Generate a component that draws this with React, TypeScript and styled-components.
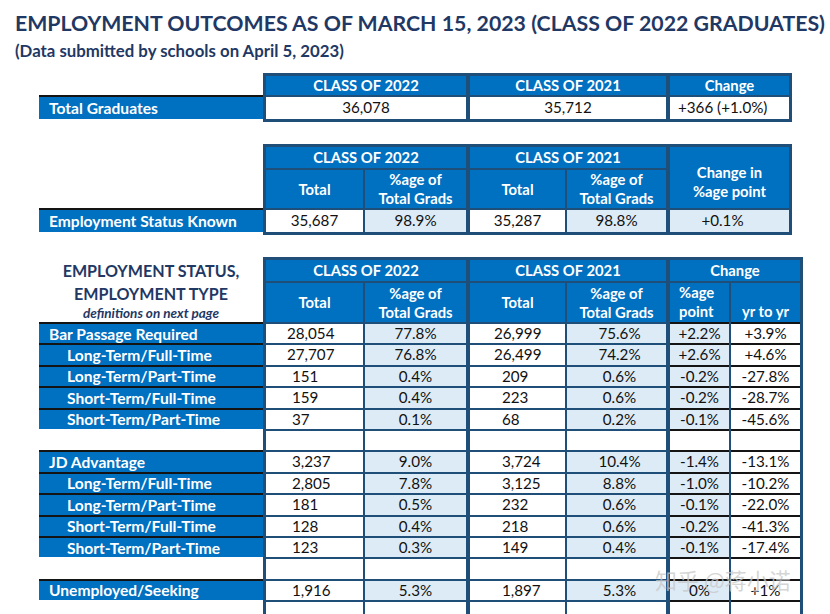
import React from 'react';
import styled, { createGlobalStyle } from 'styled-components';

const BLUE = '#0070C0';
const DARK = '#1F4E79';
const LIGHT = '#DDEBF7';
const NAVY = '#1F3864';
const RULE = '#141414';

const Global = createGlobalStyle`
  html, body { margin: 0; padding: 0; background: #ffffff; }
  body { font-family: Lato, "Noto Sans", sans-serif; }
`;

const Page = styled.div`
  position: relative;
  width: 830px;
  height: 614px;
  overflow: hidden;
  box-sizing: border-box;
  padding: 10px 0 0 15px;
  display: flex;
  flex-direction: column;
`;

const Title = styled.h1`
  margin: 0;
  font-size: 21.3px;
  line-height: 26px;
  font-weight: 700;
  color: ${NAVY};
  white-space: nowrap;
`;

const Subtitle = styled.div`
  margin-top: 5px;
  font-size: 16.8px;
  line-height: 20px;
  font-weight: 700;
  color: ${NAVY};
  white-space: nowrap;
`;

const Section = styled.section<{ $top: number }>`
  display: flex;
  align-items: flex-start;
  margin-left: 24px;
  margin-top: ${(p) => p.$top}px;
`;

const LabelCol = styled.div<{ $offset: number }>`
  width: 224px;
  flex: none;
  display: flex;
  flex-direction: column;
  padding-top: ${(p) => p.$offset}px;
`;

const LabelHead = styled.div`
  height: 65px;
  box-sizing: border-box;
  padding-top: 2px;
  display: flex;
  flex-direction: column;
  align-items: center;
  color: ${NAVY};
  font-weight: 700;
`;

const HeadLine = styled.div`
  font-size: 16.1px;
  line-height: 23px;
  white-space: nowrap;
`;

const HeadNote = styled.div`
  font-size: 13.5px;
  line-height: 17px;
  font-style: italic;
  white-space: nowrap;
`;

const LabelBar = styled.div<{ $h: number; $sub?: boolean; $blank?: boolean }>`
  height: ${(p) => p.$h}px;
  border-top: 2px solid ${(p) => (p.$blank ? 'transparent' : RULE)};
  background: ${(p) => (p.$blank ? 'transparent' : BLUE)};
  color: #ffffff;
  font-size: 15.6px;
  font-weight: 700;
  padding-left: ${(p) => (p.$sub ? 28 : 10)}px;
  display: flex;
  align-items: center;
  white-space: nowrap;
`;

const Frame = styled.div<{ $cols: string; $rows: string }>`
  flex: none;
  display: grid;
  grid-template-columns: ${(p) => p.$cols};
  grid-template-rows: ${(p) => p.$rows};
  gap: 2px;
  padding: 3px;
  background: ${DARK};
`;

const HeadCell = styled.div<{
  $span?: number;
  $rowSpan?: number;
  $group?: boolean;
  $left?: boolean;
  $bottom?: boolean;
  $padTop?: number;
}>`
  grid-column: span ${(p) => p.$span ?? 1};
  grid-row: span ${(p) => p.$rowSpan ?? 1};
  margin-left: ${(p) => (p.$group ? 2 : 0)}px;
  background: ${BLUE};
  color: #ffffff;
  font-size: 14.8px;
  font-weight: 700;
  line-height: 19px;
  display: flex;
  flex-direction: column;
  justify-content: ${(p) => (p.$bottom ? 'flex-end' : 'center')};
  align-items: ${(p) => (p.$left ? 'flex-start' : 'center')};
  text-align: ${(p) => (p.$left ? 'left' : 'center')};
  padding: ${(p) => p.$padTop ?? 0}px 0 ${(p) => (p.$bottom ? 1 : 0)}px ${(p) => (p.$left ? 9 : 0)}px;
  white-space: nowrap;
  box-sizing: border-box;
`;

const DataCell = styled.div<{
  $tone: 'white' | 'light';
  $span?: number;
  $group?: boolean;
  $left?: boolean;
  $pad?: number;
  $padR?: number;
  $rule?: boolean;
}>`
  grid-column: span ${(p) => p.$span ?? 1};
  margin-left: ${(p) => (p.$group ? 2 : 0)}px;
  background: ${(p) => (p.$tone === 'light' ? LIGHT : '#ffffff')};
  color: #111111;
  font-size: 15.2px;
  line-height: 1;
  display: flex;
  align-items: center;
  justify-content: ${(p) => (p.$left ? 'flex-start' : 'center')};
  padding-left: ${(p) => p.$pad ?? 0}px;
  padding-right: ${(p) => p.$padR ?? 0}px;
  box-shadow: ${(p) => (p.$rule ? `0 -2px 0 ${RULE}` : 'none')};
  white-space: nowrap;
  box-sizing: border-box;
`;

const Watermark = styled.div`
  position: absolute;
  left: 655px;
  top: 565px;
  font-family: "Noto Sans CJK SC", sans-serif;
  font-size: 22px;
  line-height: 28px;
  color: rgba(200, 200, 200, 0.75);
  white-space: nowrap;
  pointer-events: none;
`;

type Row = {
  label?: string;
  sub?: boolean;
  wide?: boolean;
  v?: [string, string, string, string, string, string];
};

const rows: Row[] = [
  { label: 'Bar Passage Required', wide: true, v: ['28,054', '77.8%', '26,999', '75.6%', '+2.2%', '+3.9%'] },
  { label: 'Long-Term/Full-Time', sub: true, wide: true, v: ['27,707', '76.8%', '26,499', '74.2%', '+2.6%', '+4.6%'] },
  { label: 'Long-Term/Part-Time', sub: true, v: ['151', '0.4%', '209', '0.6%', '-0.2%', '-27.8%'] },
  { label: 'Short-Term/Full-Time', sub: true, v: ['159', '0.4%', '223', '0.6%', '-0.2%', '-28.7%'] },
  { label: 'Short-Term/Part-Time', sub: true, v: ['37', '0.1%', '68', '0.2%', '-0.1%', '-45.6%'] },
  {},
  { label: 'JD Advantage', v: ['3,237', '9.0%', '3,724', '10.4%', '-1.4%', '-13.1%'] },
  { label: 'Long-Term/Full-Time', sub: true, v: ['2,805', '7.8%', '3,125', '8.8%', '-1.0%', '-10.2%'] },
  { label: 'Long-Term/Part-Time', sub: true, v: ['181', '0.5%', '232', '0.6%', '-0.1%', '-22.0%'] },
  { label: 'Short-Term/Full-Time', sub: true, v: ['128', '0.4%', '218', '0.6%', '-0.2%', '-41.3%'] },
  { label: 'Short-Term/Part-Time', sub: true, v: ['123', '0.3%', '149', '0.4%', '-0.1%', '-17.4%'] },
  {},
  { label: 'Unemployed/Seeking', v: ['1,916', '5.3%', '1,897', '5.3%', '0%', '+1%'] },
  {},
];

const ROW_H = 19.4;
const COLS5 = '97px 101px 97px 99px 121px';
const COLS6 = '97px 101px 97px 99px 61px 69px';

export default function App() {
  return (
    <Page>
      <Global />
      <Title>EMPLOYMENT OUTCOMES AS OF MARCH 15, 2023 (CLASS OF 2022 GRADUATES)</Title>
      <Subtitle>(Data submitted by schools on April 5, 2023)</Subtitle>

      <Section $top={12}>
        <LabelCol $offset={22}>
          <LabelBar $h={22}>Total Graduates</LabelBar>
        </LabelCol>
        <Frame $cols={COLS5} $rows="19px 22px">
          <HeadCell $span={2}>CLASS OF 2022</HeadCell>
          <HeadCell $span={2} $group>CLASS OF 2021</HeadCell>
          <HeadCell $group>Change</HeadCell>
          <DataCell $tone="white" $span={2}>36,078</DataCell>
          <DataCell $tone="white" $span={2} $group>35,712</DataCell>
          <DataCell $tone="white" $group $left $pad={8}>+366 (+1.0%)</DataCell>
        </Frame>
      </Section>

      <Section $top={22}>
        <LabelCol $offset={64}>
          <LabelBar $h={22}>Employment Status Known</LabelBar>
        </LabelCol>
        <Frame $cols={COLS5} $rows="21px 38px 22px">
          <HeadCell $span={2}>CLASS OF 2022</HeadCell>
          <HeadCell $span={2} $group>CLASS OF 2021</HeadCell>
          <HeadCell $group $rowSpan={2} $padTop={8}>
            <span>Change in</span>
            <span>%age point</span>
          </HeadCell>
          <HeadCell>Total</HeadCell>
          <HeadCell>
            <span>%age of</span>
            <span>Total Grads</span>
          </HeadCell>
          <HeadCell $group>Total</HeadCell>
          <HeadCell>
            <span>%age of</span>
            <span>Total Grads</span>
          </HeadCell>
          <DataCell $tone="white">35,687</DataCell>
          <DataCell $tone="light">98.9%</DataCell>
          <DataCell $tone="white" $group>35,287</DataCell>
          <DataCell $tone="light">98.8%</DataCell>
          <DataCell $tone="light" $group $padR={14}>+0.1%</DataCell>
        </Frame>
      </Section>

      <Section $top={22}>
        <LabelCol $offset={0}>
          <LabelHead>
            <HeadLine>EMPLOYMENT STATUS,</HeadLine>
            <HeadLine>EMPLOYMENT TYPE</HeadLine>
            <HeadNote>definitions on next page</HeadNote>
          </LabelHead>
          {rows.map((r, i) => (
            <LabelBar key={i} $h={ROW_H} $sub={r.sub} $blank={!r.label}>
              {r.label}
            </LabelBar>
          ))}
        </LabelCol>
        <Frame $cols={COLS6} $rows={`21px 39px repeat(${rows.length}, ${ROW_H}px)`}>
          <HeadCell $span={2}>CLASS OF 2022</HeadCell>
          <HeadCell $span={2} $group>CLASS OF 2021</HeadCell>
          <HeadCell $span={2} $group>Change</HeadCell>
          <HeadCell>Total</HeadCell>
          <HeadCell>
            <span>%age of</span>
            <span>Total Grads</span>
          </HeadCell>
          <HeadCell $group>Total</HeadCell>
          <HeadCell>
            <span>%age of</span>
            <span>Total Grads</span>
          </HeadCell>
          <HeadCell $group $left $bottom>
            <span>%age</span>
            <span>point</span>
          </HeadCell>
          <HeadCell $bottom>yr to yr</HeadCell>
          {rows.map((r, i) => {
            const v = r.v;
            const filled = !!v;
            return (
              <React.Fragment key={i}>
                <DataCell $tone="white" $left $pad={r.wide ? 21 : 26}>{v?.[0]}</DataCell>
                <DataCell $tone={filled ? 'light' : 'white'}>{v?.[1]}</DataCell>
                <DataCell $tone="white" $group $left $pad={r.wide ? 24 : 32}>{v?.[2]}</DataCell>
                <DataCell $tone={filled ? 'light' : 'white'} $pad={6}>{v?.[3]}</DataCell>
                <DataCell $tone={filled ? 'light' : 'white'} $group $rule>{v?.[4]}</DataCell>
                <DataCell $tone="white" $rule>{v?.[5]}</DataCell>
              </React.Fragment>
            );
          })}
        </Frame>
      </Section>

      <Watermark>知乎 @蒋小诺</Watermark>
    </Page>
  );
}
